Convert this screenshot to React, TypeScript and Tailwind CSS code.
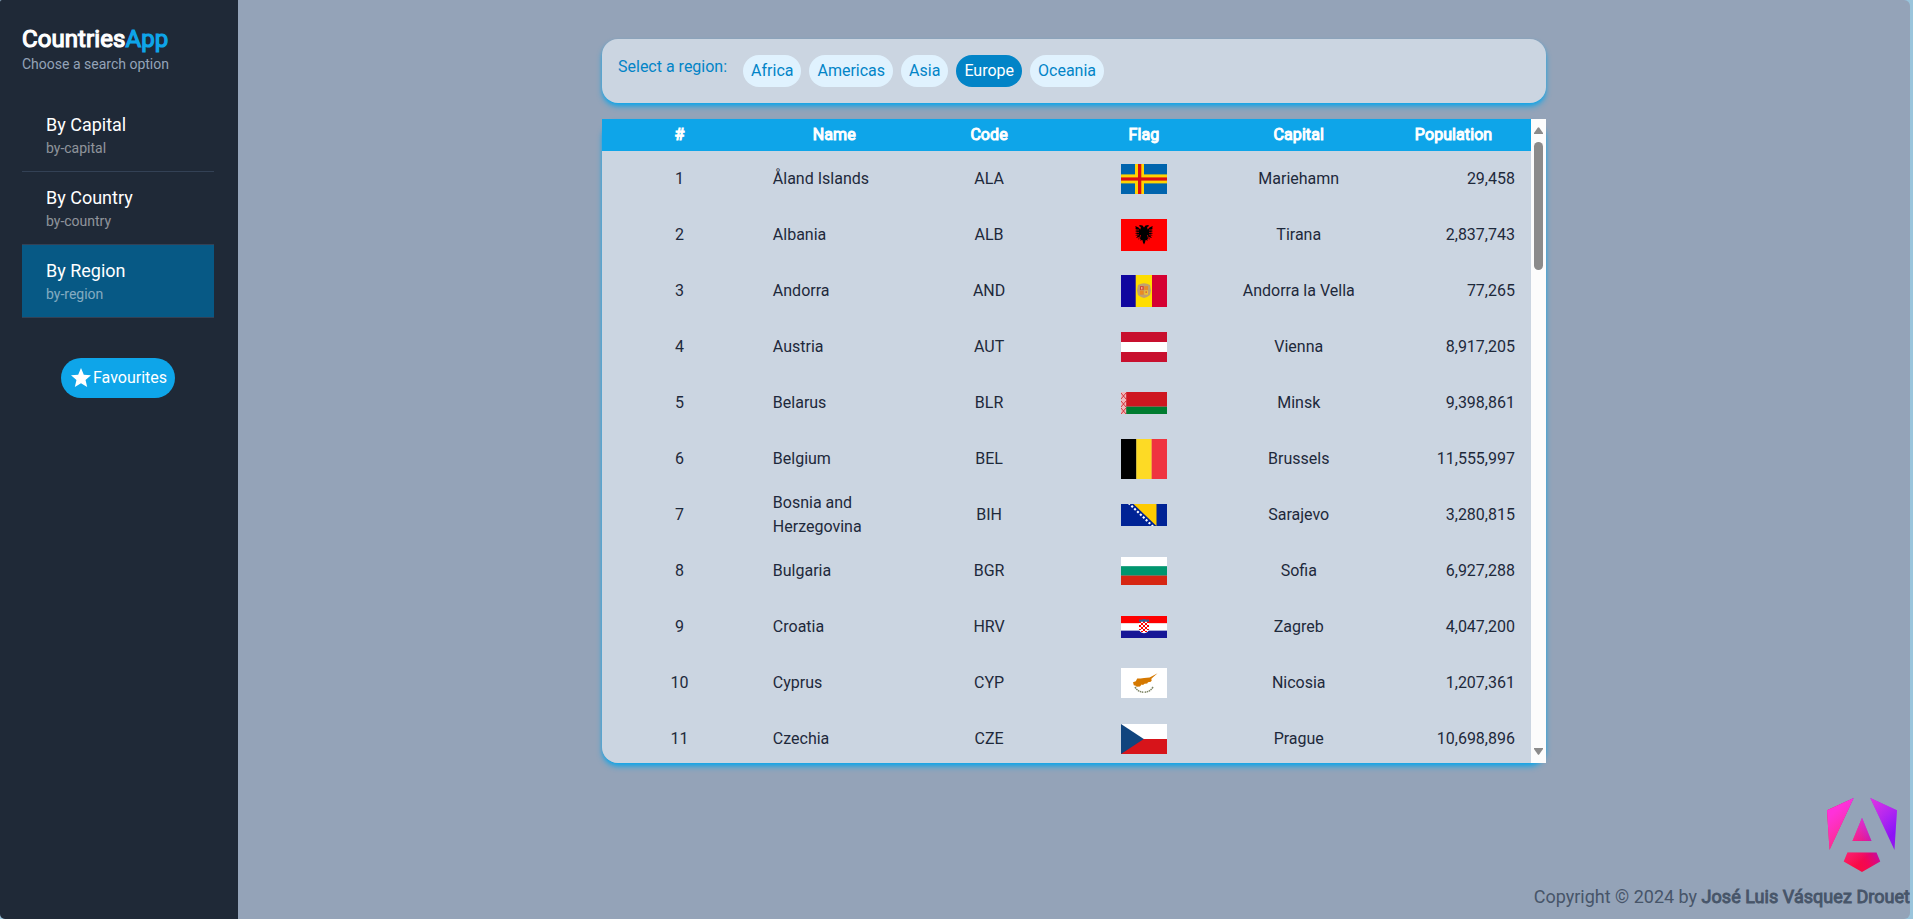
import type { ReactNode } from 'react';

type Country = { name: string; code: string; capital: string; population: string; height: number; flag: ReactNode };

const band = (x: number, y: number, w: number, h: number, fill: string) => (
  <rect x={x} y={y} width={w} height={h} fill={fill} />
);

const countries: Country[] = [
  {
    name: 'Åland Islands', code: 'ALA', capital: 'Mariehamn', population: '29,458', height: 30,
    flag: (<>{band(0, 0, 46, 30, '#0064ad')}{band(14, 0, 9, 30, '#ffd300')}{band(0, 10.4, 46, 9, '#ffd300')}{band(17, 0, 3.3, 30, '#da0e15')}{band(0, 13.4, 46, 3.2, '#da0e15')}</>),
  },
  {
    name: 'Albania', code: 'ALB', capital: 'Tirana', population: '2,837,743', height: 32,
    flag: (<>{band(0, 0, 46, 32, '#ff0000')}<path d="M23 8.6 L21.5 6.4 18.5 6 18.2 7.3 19.8 8 19.4 10.5 17.5 8.5 14.3 7 14.8 9.3 14.2 10 15.8 11 14 12 16 13 14 14.2 16.3 15 14.2 16.5 16.8 16.8 15 19 18.5 18 17 20.5 20 19.8 19 21.6 21.4 21 22 23.4 23 25.4 24 23.4 24.6 21 27 21.6 26 19.8 29 20.5 27.5 18 31 19 29.2 16.8 31.8 16.5 29.7 15 32 14.2 30 13 32 12 30.2 11 31.8 10 31.2 9.3 31.7 7 28.5 8.5 26.6 10.5 26.2 8 27.8 7.3 27.5 6 24.5 6.4Z" fill="#000" /><path d="M14 11h4M14 13.4h4M14 15.8h4M28 11h4M28 13.4h4M28 15.8h4M19.6 16l-1.6 5M26.4 16l1.6 5" stroke="#f00" strokeWidth=".7" /></>),
  },
  {
    name: 'Andorra', code: 'AND', capital: 'Andorra la Vella', population: '77,265', height: 32,
    flag: (<>{band(0, 0, 15, 32, '#10069f')}{band(14.7, 0, 16.6, 32, '#fedd00')}{band(31, 0, 15, 32, '#d50032')}<path d="M17 10l3-1.2 3-.6 3 .6 3 1.2 1 5.5-1 4.5-3 2-3 1-3-1-3-2-1-4.5z" fill="#c0a070" />{band(19, 11.2, 3.7, 3.7, '#d53a32')}{band(20.2, 12, 1.2, 2.4, '#f3c9a0')}{band(23.3, 11.2, 3.7, 3.7, '#e98b25')}{band(19, 15.4, 3.7, 4.3, '#e98b25')}{band(23.3, 15.4, 3.7, 4.3, '#f0c030')}{band(24.5, 16.4, 1.4, 1.4, '#d0503a')}</>),
  },
  {
    name: 'Austria', code: 'AUT', capital: 'Vienna', population: '8,917,205', height: 30,
    flag: (<>{band(0, 0, 46, 30, '#c8102e')}{band(0, 10, 46, 10, '#fff')}</>),
  },
  {
    name: 'Belarus', code: 'BLR', capital: 'Minsk', population: '9,398,861', height: 22,
    flag: (<>{band(0, 0, 46, 14.7, '#ce1720')}{band(0, 14.7, 46, 7.3, '#007c30')}{band(0, 0, 5.2, 22, '#f0b9bc')}<path d="M0 1l2.5 3L5 1M0 7l2.5-3L5 7M0 9l2.5 3L5 9M0 15l2.5-3L5 15M0 16l2.5 3L5 16M0 22l2.5-3L5 22" fill="none" stroke="#ce1720" strokeWidth=".8" /></>),
  },
  {
    name: 'Belgium', code: 'BEL', capital: 'Brussels', population: '11,555,997', height: 40,
    flag: (<>{band(0, 0, 15.5, 40, '#000')}{band(15.33, 0, 15.5, 40, '#fdda25')}{band(30.67, 0, 15.4, 40, '#ef3340')}</>),
  },
  {
    name: 'Bosnia and Herzegovina', code: 'BIH', capital: 'Sarajevo', population: '3,280,815', height: 22,
    flag: (<>{band(0, 0, 46, 22, '#002395')}<path d="M12.5 0H35.5V22Z" fill="#fecb00" /><path d="M7.5-1L33 23.5" stroke="#fff" strokeWidth="2.1" strokeDasharray="2.1 1.9" /></>),
  },
  {
    name: 'Bulgaria', code: 'BGR', capital: 'Sofia', population: '6,927,288', height: 28,
    flag: (<>{band(0, 0, 46, 9.4, '#fff')}{band(0, 9.2, 46, 9.5, '#00966e')}{band(0, 18.6, 46, 9.4, '#d62612')}</>),
  },
  {
    name: 'Croatia', code: 'HRV', capital: 'Zagreb', population: '4,047,200', height: 22,
    flag: (<>{band(0, 0, 46, 7.4, '#ff0000')}{band(0, 7.33, 46, 7.4, '#fff')}{band(0, 14.67, 46, 7.4, '#171796')}<path d="M18 5h10v7.5q0 4-5 4.7q-5-.7-5-4.7z" fill="#fff" /><path d="M19 5v9M23 5v12M27 5v9" stroke="#f00" strokeWidth="2" strokeDasharray="2 2" /><path d="M21 7v9M25 7v9" stroke="#f00" strokeWidth="2" strokeDasharray="2 2" /><path d="M18 3.5l2.5 .3 2.5-.8 2.5 .8 2.5-.3v2.2H18z" fill="#2f5f93" /></>),
  },
  {
    name: 'Cyprus', code: 'CYP', capital: 'Nicosia', population: '1,207,361', height: 30,
    flag: (<>{band(0, 0, 46, 30, '#fff')}<path d="M12 14.2l.8 3 2 .6 .8 1 3.4-.3 1.6-2 1.4 .4 1.6-1.2 2.6-.3 .8-1.2 2.8-.4 1-1.6-.6-1.2 1.8-1.8 4.6-4-8 4.2-5.5 .6-3.5 .6-3.4-.2-1.4 2.8z" fill="#d57800" /><path d="M14 19q3 5 8.3 5.2M32 19q-3 5-8.3 5.2" fill="none" stroke="#7d8464" strokeWidth="1.5" strokeDasharray="1.6 .6" /></>),
  },
  {
    name: 'Czechia', code: 'CZE', capital: 'Prague', population: '10,698,896', height: 30,
    flag: (<>{band(0, 0, 46, 15, '#fff')}{band(0, 15, 46, 15, '#d7141a')}<path d="M0 0L22.8 15 0 30Z" fill="#11457e" /></>),
  },
];

const links = [
  { title: 'By Capital', path: 'by-capital', active: false },
  { title: 'By Country', path: 'by-country', active: false },
  { title: 'By Region', path: 'by-region', active: true },
];

const regions = ['Africa', 'Americas', 'Asia', 'Europe', 'Oceania'];
const headers = ['#', 'Name', 'Code', 'Flag', 'Capital', 'Population'];

function Sidebar() {
  return (
    <aside className="flex w-[238px] shrink-0 flex-col bg-[#1f2937] px-[22px] pt-[23px]">
      <h1 className="text-2xl leading-8 tracking-[0.08px] text-white [-webkit-text-stroke:1.2px]">
        Countries<span className="text-[#0ea5e9]">App</span>
      </h1>
      <p className="-mt-px text-sm leading-5 text-[#94a3b8]">Choose a search option</p>
      <nav className="mt-[25px] flex w-48 flex-col">
        {links.map((l) => (
          <a key={l.title} className={l.active ? 'border-b border-[#334155] bg-[#075985] px-6 pt-3 pb-3.5' : 'border-b border-[#334155] px-6 pt-3 pb-3.5'}>
            <div className="text-lg leading-7 text-white">{l.title}</div>
            <div className="text-sm leading-[18px] text-white/50">{l.path}</div>
          </a>
        ))}
      </nav>
      <button className="mt-10 ml-[39px] flex h-10 items-center self-start rounded-full bg-[#0ea5e9] px-2 text-white">
        <svg className="size-6" viewBox="0 0 24 24" fill="currentColor">
          <path d="M12 17.27 18.18 21l-1.64-7.03L22 9.24l-7.19-.61L12 2 9.19 8.63 2 9.24l5.46 4.73L5.82 21z" />
        </svg>
        Favourites
      </button>
    </aside>
  );
}

function AngularLogo() {
  const shape = 'm222.077 39.192-8.019 125.923L137.387 0l84.69 39.192Zm-53.105 162.825-57.933 33.056-57.934-33.056 11.783-28.556h92.301l11.783 28.556ZM111.039 62.675l30.357 73.803H80.681l30.358-73.803ZM7.937 165.115 0 39.192 84.69 0 7.937 165.115Z';
  return (
    <svg className="h-[74px] w-[70px]" viewBox="0 0 222.1 235.1" preserveAspectRatio="none">
      <defs>
        <linearGradient id="base" x1="53" y1="214" x2="220" y2="118" gradientUnits="userSpaceOnUse">
          <stop stopColor="#FF0A3C" />
          <stop offset=".24" stopColor="#F60A48" />
          <stop offset=".352" stopColor="#F20755" />
          <stop offset=".494" stopColor="#DC087D" />
          <stop offset=".745" stopColor="#9717E7" />
          <stop offset="1" stopColor="#8A12FA" />
        </linearGradient>
        <linearGradient id="glow" x1="41" y1="28.3" x2="156.7" y2="160.3" gradientUnits="userSpaceOnUse">
          <stop stopColor="#FF31D9" />
          <stop offset="1" stopColor="#FF5BE1" stopOpacity="0" />
        </linearGradient>
      </defs>
      <path d={shape} fill="url(#base)" />
      <path d={shape} fill="url(#glow)" />
    </svg>
  );
}

export default function App() {
  return (
    <div className="h-[919px] w-full overflow-hidden bg-[#99c4db] pr-[3px] font-[Roboto,sans-serif] text-base">
      <div className="flex h-full overflow-hidden rounded-r-md rounded-tl-[2px] rounded-bl-[5px] bg-[#94a3b8]">
        <Sidebar />
        <main className="flex min-w-0 flex-1 flex-col">
          <div className="ml-[364px] flex w-[944px] flex-col gap-4 pt-[39px]">
            <section className="flex h-16 rounded-2xl bg-[#cbd5e1] p-4 text-[#0284c7] shadow-[0_4px_6px_-1px_#0ea5e9,0_2px_4px_-2px_#0ea5e9]">
              <span className="leading-6">Select a region:</span>
              <div className="ml-4 flex gap-2">
                {regions.map((r) => (
                  <button key={r} className={r === 'Europe' ? 'h-8 rounded-full bg-[#0284c7] px-2 text-white' : 'h-8 rounded-full bg-[#e0f2fe] px-2'}>
                    {r}
                  </button>
                ))}
              </div>
            </section>
            <section className="flex h-[644px] rounded-2xl shadow-[0_4px_6px_-1px_#0ea5e9,0_2px_4px_-2px_#0ea5e9]">
              <div className="min-w-0 flex-1 overflow-hidden rounded-bl-2xl bg-[#cbd5e1] text-[#1e293b]">
                <div className="grid h-8 grid-cols-6 bg-[#0ea5e9] text-center leading-8 tracking-[0.08px] text-white [-webkit-text-stroke:1px]">
                  {headers.map((h) => (
                    <div key={h}>{h}</div>
                  ))}
                </div>
                {countries.map((c, i) => (
                  <div key={c.code} className="grid h-14 grid-cols-6 items-center text-center">
                    <div>{i + 1}</div>
                    <div className="px-4 text-left">{c.name}</div>
                    <div>{c.code}</div>
                    <svg className="mx-auto block w-[46px]" height={c.height} viewBox={`0 0 46 ${c.height}`}>
                      {c.flag}
                    </svg>
                    <div>{c.capital}</div>
                    <div className="px-4 text-right">{c.population}</div>
                  </div>
                ))}
              </div>
              <div className="flex w-[15px] flex-col items-center bg-[#fcfcfc] pt-2 pb-2">
                <svg className="h-[7px] w-[9px]" viewBox="0 0 9 7"><path d="M3.7.7Q4.5-.3 5.3.7L9 6V7H0V6Z" fill="#8b8b8b" /></svg>
                <div className="mt-2 h-32 w-[9px] rounded-full bg-[#8b8b8b]" />
                <svg className="mt-auto h-[7px] w-[9px]" viewBox="0 0 9 7"><path d="M3.7 6.3Q4.5 7.3 5.3 6.3L9 1V0H0V1Z" fill="#8b8b8b" /></svg>
              </div>
            </section>
          </div>
          <footer className="mt-auto flex flex-col items-end pb-2 text-lg leading-7 text-[#475569]">
            <div className="mr-[13px] mb-[11px]"><AngularLogo /></div>
            <p>
              Copyright © 2024 by <strong className="font-normal tracking-[0.04px] [-webkit-text-stroke:0.9px]">José Luis Vásquez Drouet</strong>
            </p>
          </footer>
        </main>
      </div>
    </div>
  );
}
